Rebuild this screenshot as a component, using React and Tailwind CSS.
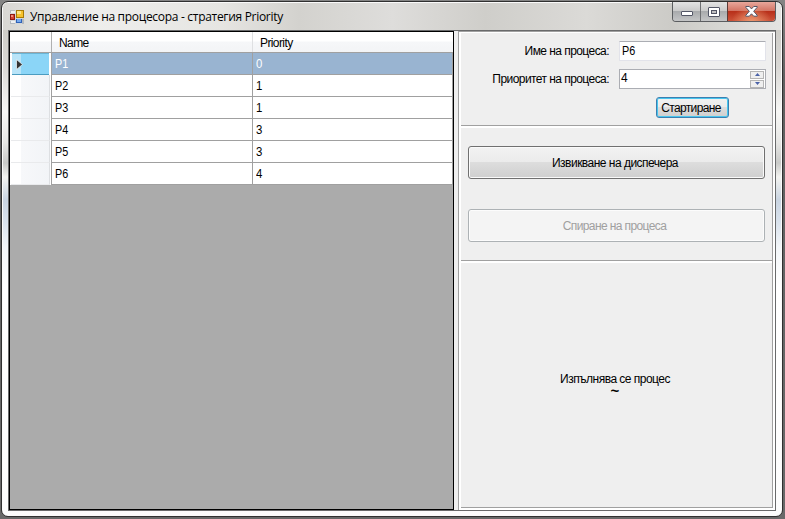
import React from "react";

const rows = [
  ["P1", "0"],
  ["P2", "1"],
  ["P3", "1"],
  ["P4", "3"],
  ["P5", "3"],
  ["P6", "4"],
];

const ui = "font-['Liberation_Sans',Arial,sans-serif] text-[12px] leading-[14px]";

function AppIcon() {
  return (
    <svg width="14" height="14" viewBox="0 0 14 14" className="shrink-0" shapeRendering="crispEdges">
      <rect x="0" y="0" width="14" height="14" fill="#d3d6d9" />
      <path d="M0 0h5v3H0zM0 11h5v3H0zM12 9h2v5h-2z" fill="#b4b9bf" />
      <rect x="1" y="1" width="4" height="2" fill="#f0f1f2" />
      <rect x="1" y="11" width="4" height="2" fill="#f0f1f2" />
      <rect x="0" y="4" width="5" height="6" fill="#8e1a14" />
      <rect x="1" y="5" width="3" height="4" fill="#d63f31" />
      <rect x="1" y="5" width="2" height="2" fill="#f18e7c" />
      <rect x="6" y="0" width="8" height="8" fill="#a87a06" />
      <rect x="7" y="1" width="6" height="6" fill="#f6c22c" />
      <rect x="7" y="1" width="4" height="3" fill="#ffe382" />
      <rect x="6" y="9" width="6" height="4" fill="#2f62b8" />
      <rect x="7" y="9" width="4" height="3" fill="#76a9ee" />
    </svg>
  );
}

function TitleButtons() {
  return (
    <div className="flex h-[20px] w-[104px] overflow-hidden rounded-b-[4px] border border-t-0 border-[#5b5d60]">
      <div className="flex w-[28px] items-center justify-center border-r border-[#6f7073] bg-[linear-gradient(#e3e3e3_0%,#cbcbcb_45%,#a9abad_50%,#c4c5c6_100%)]">
        <svg width="12" height="5" viewBox="0 0 12 5" className="mt-[4px]">
          <rect x=".5" y=".5" width="11" height="4" rx=".5" fill="#fff" stroke="#535666" />
        </svg>
      </div>
      <div className="flex w-[27px] items-center justify-center border-r border-[#5b3a36] bg-[linear-gradient(#e3e3e3_0%,#cbcbcb_45%,#a9abad_50%,#c4c5c6_100%)]">
        <svg width="12" height="10" viewBox="0 0 12 10">
          <rect x=".5" y=".5" width="11" height="9" rx=".5" fill="#fff" stroke="#535666" />
          <rect x="3.5" y="3.5" width="5" height="3" fill="#c0c0c2" stroke="#535666" />
        </svg>
      </div>
      <div className="flex flex-1 items-center justify-center bg-[radial-gradient(ellipse_at_50%_110%,#ee9c72_0%,transparent_60%),linear-gradient(#e8a79b_0%,#d37666_45%,#b8301a_50%,#cc5238_100%)]">
        <svg width="13" height="11" viewBox="0 0 13 11">
          <path
            d="M.8.5h3.5l2.2 2.4L8.7.5h3.500v.8L8.700 5.300l3.500 4v.9H8.700L6.500 7.800 4.300 10.200H.8v-.9l3.500-4-3.500-4z"
            fill="#fff"
            stroke="#535666"
          />
        </svg>
      </div>
    </div>
  );
}

function DataGrid() {
  return (
    <div className="flex w-[445px] flex-col border border-black bg-[#ababab]">
      <div className={`flex h-[21px] border-b border-[#a0a0a0] bg-[linear-gradient(#fff_0%,#fff_45%,#f6f7f9_50%,#f3f4f6_100%)] pl-px ${ui} text-[11px]`}>
        <div className="w-[41px] border-r border-[#b0b0b0]" />
        <div className="flex w-[201px] items-center border-r border-[#dfe0e2] pl-[7px] pt-[2px]">
          <span className="tracking-[-0.6px]">Name</span>
        </div>
        <div className="flex flex-1 items-center pl-[7px] pt-[2px]">
          <span className="tracking-[-0.6px]">Priority</span>
        </div>
      </div>
      {rows.map(([name, priority], i) => (
        <div key={name} className={`flex h-[22px] ${ui}`}>
          {i === 0 ? (
            <div className="flex w-[42px] border-r border-[#a0a0a0] bg-white pl-[2px] pr-[2px]">
              <div className="flex flex-1 items-center border-b border-t border-b-[#4b9cc0] border-t-[#6ab5d6] bg-[linear-gradient(90deg,#b9e4f8_0,#b9e4f8_9px,#8bd5f7_9px)] pl-[4px]">
                <svg width="7" height="11" viewBox="0 0 7 11">
                  <path d="M.5.500 6.500 5.500.5 10.500z" fill="#333" stroke="#f5fbfe" strokeWidth=".7" />
                </svg>
              </div>
            </div>
          ) : (
            <div className="flex w-[42px] border-r border-[#a0a0a0] bg-white pl-px pr-px">
              <div className="flex-1 border-b border-r border-b-[#e9eaec] border-r-[#dddfe2] bg-[linear-gradient(90deg,#fff_0,#fff_10px,#f7f8fa_10px,#f2f4f7_100%)]" />
            </div>
          )}
          <div className={`flex flex-1 border-b border-[#a0a0a0] ${i === 0 ? "bg-[#99b4d1] text-white" : "bg-white text-black"}`}>
            <div className="flex w-[201px] items-center border-r border-[#a0a0a0] pl-[3px]">
              <span className="inline-block origin-left scale-x-90">{name}</span>
            </div>
            <div className="flex flex-1 items-center border-r border-[#a0a0a0] pl-[3px]">
              <span className="inline-block origin-left scale-x-95">{priority}</span>
            </div>
          </div>
        </div>
      ))}
    </div>
  );
}

function Spinner() {
  return (
    <div className="flex w-[14px] flex-col gap-px">
      {[true, false].map((up) => (
        <div key={String(up)} className="flex h-[8px] items-center justify-center border border-[#b5b5b5] bg-[#efefef]">
          <svg width="5" height="3" viewBox="0 0 5 3">
            <path d={up ? "M0 3 2.500 0 5 3z" : "M0 0h5L2.500 3z"} fill="#4a62a8" />
          </svg>
        </div>
      ))}
    </div>
  );
}

function ControlPanel() {
  return (
    <div className={`flex w-[317px] flex-col border-l border-t border-[#a0a0a0] bg-white px-[2px] pb-[2px] pt-px ${ui} text-black`}>
      <div className="flex flex-1 flex-col border-r border-[#a0a0a0] bg-[#efefef]">
        <div className="flex h-[93px] flex-col border-b border-[#a0a0a0] pl-[7px] pr-[6px] pt-[8px]">
          <div className="flex h-[20px] items-center">
            <span className="w-[141px] whitespace-nowrap text-right tracking-[-0.56px]">Име на процеса:</span>
            <div className="ml-[10px] flex h-[20px] flex-1 items-center rounded-[1px] border border-[#e2e3ea] border-t-[#abadb3] bg-white pl-[2px]">
              <span className="inline-block origin-left scale-x-90">P6</span>
            </div>
          </div>
          <div className="mt-[8px] flex h-[20px] items-center">
            <span className="w-[141px] whitespace-nowrap text-right tracking-[-0.56px]">Приоритет на процеса:</span>
            <div className="ml-[10px] flex h-[20px] flex-1 items-center justify-between border border-[#abadb3] bg-white pl-[1px] pr-[1px]">
              <span className="pb-[2px]">4</span>
              <Spinner />
            </div>
          </div>
          <button className="ml-[188px] mt-[8px] flex h-[21px] w-[73px] shrink-0 items-center justify-center rounded-[3px] border border-[#3c7fb1] bg-[linear-gradient(#f2f2f2_0%,#ebebeb_50%,#dddddd_50%,#cfcfcf_100%)] shadow-[inset_0_0_0_1px_#48c6ee]">
            <span className="mr-[3px] tracking-[-0.65px]">Стартиране</span>
          </button>
        </div>
        <div className="flex h-[135px] flex-col border-b border-t-2 border-b-[#a0a0a0] border-t-white px-[7px] pt-[18px]">
          <button className="flex h-[33px] shrink-0 items-center justify-center rounded-[3px] border border-[#707070] bg-[linear-gradient(#f2f2f2_0%,#ebebeb_50%,#dddddd_50%,#cfcfcf_100%)] shadow-[inset_0_0_0_1px_#fafafa]">
            <span className="mr-[3px] tracking-[-0.52px]">Извикване на диспечера</span>
          </button>
          <button className="mt-[30px] flex h-[33px] shrink-0 items-center justify-center rounded-[3px] border border-[#adb2b5] bg-[#f4f4f4] text-[#a0a0a0] shadow-[inset_0_0_0_1px_#fcfcfc]">
            <span className="mr-[4px] tracking-[-0.6px]">Спиране на процеса</span>
          </button>
        </div>
        <div className="flex flex-1 flex-col items-center border-b border-t-2 border-b-[#a0a0a0] border-t-white pr-[3px] pt-[109px]">
          <span className="tracking-[-0.52px]">Изпълнява се процес</span>
          <span className="text-[15px] font-bold leading-[10px]">~</span>
        </div>
      </div>
    </div>
  );
}

export default function App() {
  return (
    <div className="h-[519px] w-[785px] overflow-hidden bg-[linear-gradient(#858585_0%,#606060_15%,#696969_100%)] pl-px pt-px">
      <div className="flex h-[516px] w-[782px] flex-col rounded-[7px] border border-[#303030] bg-[linear-gradient(#d7d5d0_0px,#cecdc8_28px,#d9d8d5_65px,#f7f7f5_110px,#e7e7e5_140px,#c9cac8_161px,#f3f3f0_175px,#c9d4e1_198px,#d9e2ec_220px,#f2f5f8_245px,#fff_285px,#fcfcfc_100%)] px-[6px] shadow-[inset_0_0_0_1px_#fafafa]">
        <div className="mx-[-5px] mt-px flex h-[27px] rounded-t-[5px] bg-[linear-gradient(90deg,#d8d7d3_0%,#eeeeec_12%,#e6e5e2_28%,#d3d2ce_38%,#dedddb_50%,#cfceca_62%,#dbdad7_75%,#cccbc7_86%,#e4e4e1_100%)] pl-[7px] pr-[5px]">
          <div className="flex flex-1 items-center gap-[6px] font-['Open_Sans','Noto_Sans',sans-serif] text-[12px] leading-[16px] text-black">
            <AppIcon />
            <span className="whitespace-nowrap tracking-[-0.3px]">Управление на процесора - стратегия Priority</span>
          </div>
          <div className="-mt-px">
            <TitleButtons />
          </div>
        </div>
        <div className="flex h-[481px] border border-[#696a6b] bg-[#f4f4f4]">
          <DataGrid />
          <div className="w-[4px] bg-[#efefef]" />
          <ControlPanel />
        </div>
      </div>
    </div>
  );
}
